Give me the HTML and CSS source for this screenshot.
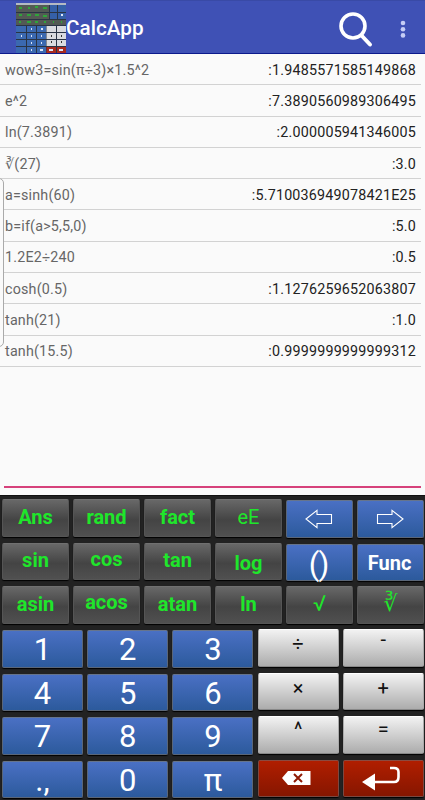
FILE: index.html
```html
<!DOCTYPE html>
<html lang="en">
<head>
    <meta charset="UTF-8">
    <meta name="viewport" content="width=device-width, initial-scale=1.0">
    <title>CalcApp</title>
    <link rel="stylesheet" href="styles.css">
</head>
<body>
    <header class="toolbar">
        <svg class="logo" viewBox="0 0 50 50">
            <rect width="50" height="50" fill="#2a3444"/>
            <rect width="50" height="2" fill="#b4bac4"/>
            <path d="M0 2h33v7H0zM0 10h33v6H0zM0 17h50v5H0z" fill="#535a54"/>
            <path d="M34 2h7v7h-7zM42 2h8v7h-8zM34 10h7v6h-7zM42 10h8v6h-8z" fill="#3560a8"/>
            <path d="M0 23h10v6H0zM11 23h9v6h-9zM21 23h9v6h-9zM0 30h10v6H0zM11 30h9v6h-9zM21 30h9v6h-9zM0 37h10v6H0zM11 37h9v6h-9zM21 37h9v6h-9zM0 44h10v6H0zM11 44h9v6h-9zM21 44h9v6h-9z" fill="#3b69b0"/>
            <path d="M30.500 23h9.500v6h-9.500zM41 23h9v6h-9zM30.500 30h9.500v6h-9.500zM41 30h9v6h-9zM30.500 37h9.500v6h-9.500zM41 37h9v6h-9z" fill="#d9dbdf"/>
            <path d="M30.500 44h9.500v6h-9.500zM41 44h9v6h-9z" fill="#a82a1e"/>
            <path d="M3 5h3M12 5h2M19 4h3M27 5h4M3 12h3M11 12h4M19 12h4M27 13h4M3 19h2M11 19h4M19 19h3M28 19h2M37 19h1M45 19h1" stroke="#2fa53a" stroke-width="2"/>
            <path d="M15 26h1M25 26h2M5 33h1M15 33h1M25 33h1M15 40h1M25 40h1M15 47h1M24 47h3M33 47h4M43 47h4M45 12h2" stroke="#dce6f8" stroke-width="2"/>
            <path d="M35 33h1M45 33h1M35 39h1M45 39h1" stroke="#333" stroke-width="2"/>
        </svg>
        <h1>CalcApp</h1>
        <svg class="search" viewBox="0 0 34 36">
            <circle cx="14" cy="14" r="12" fill="none" stroke="#fff" stroke-width="3.6"/>
            <path d="M22.5 23.5L31 32.5" stroke="#fff" stroke-width="4" stroke-linecap="round"/>
        </svg>
        <svg class="more" viewBox="0 0 6 18">
            <g fill="#c5cdf5">
                <circle cx="3" cy="3" r="2.3"/>
                <circle cx="3" cy="9.2" r="2.3"/>
                <circle cx="3" cy="15.4" r="2.3"/>
            </g>
        </svg>
    </header>

    <main class="history">
        <div class="edge-handle"></div>
        <div class="row"><span>wow3=sin(π÷3)×1.5^2</span><b>:1.9485571585149868</b></div>
        <div class="row"><span>e^2</span><b>:7.3890560989306495</b></div>
        <div class="row"><span>ln(7.3891)</span><b>:2.000005941346005</b></div>
        <div class="row"><span>∛(27)</span><b>:3.0</b></div>
        <div class="row"><span>a=sinh(60)</span><b>:5.710036949078421E25</b></div>
        <div class="row"><span>b=if(a&gt;5,5,0)</span><b>:5.0</b></div>
        <div class="row"><span>1.2E2÷240</span><b>:0.5</b></div>
        <div class="row"><span>cosh(0.5)</span><b>:1.1276259652063807</b></div>
        <div class="row"><span>tanh(21)</span><b>:1.0</b></div>
        <div class="row"><span>tanh(15.5)</span><b>:0.9999999999999312</b></div>
    </main>

    <div class="entry"></div>

    <section class="keypad">
        <div class="functions">
            <button class="key fn">Ans</button>
            <button class="key fn">rand</button>
            <button class="key fn">fact</button>
            <button class="key fn light">eE</button>
            <button class="key blue low arrow">
                <svg width="28" height="20" viewBox="0 0 28 20"><path d="M1 10L12 1.3V5.5H26.5V14.5H12V18.7Z" fill="none" stroke="#fff" stroke-width="1.1"/></svg>
            </button>
            <button class="key blue low arrow">
                <svg width="28" height="20" viewBox="0 0 28 20"><path d="M27 10L16 1.3V5.5H1.5V14.5H16V18.7Z" fill="none" stroke="#fff" stroke-width="1.1"/></svg>
            </button>

            <button class="key fn">sin</button>
            <button class="key fn up">cos</button>
            <button class="key fn">tan</button>
            <button class="key fn down">log</button>
            <button class="key blue low paren">()</button>
            <button class="key blue low func">Func</button>

            <button class="key fn">asin</button>
            <button class="key fn up">acos</button>
            <button class="key fn">atan</button>
            <button class="key fn">ln</button>
            <button class="key fn root">√</button>
            <button class="key fn root cube">∛</button>
        </div>

        <div class="numbers">
            <button class="key blue num">1</button>
            <button class="key blue num">2</button>
            <button class="key blue num">3</button>
            <button class="key white">÷</button>
            <button class="key white minus">-</button>

            <button class="key blue num">4</button>
            <button class="key blue num">5</button>
            <button class="key blue num">6</button>
            <button class="key white">×</button>
            <button class="key white">+</button>

            <button class="key blue num">7</button>
            <button class="key blue num">8</button>
            <button class="key blue num">9</button>
            <button class="key white caret">^</button>
            <button class="key white equals">=</button>

            <button class="key blue num">.,</button>
            <button class="key blue num">0</button>
            <button class="key blue num">π</button>
            <button class="key red">
                <svg width="30" height="16" viewBox="0 0 30 16">
                    <path d="M1 8L7 1H29.5V15H7Z" fill="#fff"/>
                    <path d="M13 4L21 12M21 4L13 12" stroke="#8f1a05" stroke-width="2"/>
                </svg>
            </button>
            <button class="key red">
                <svg width="40" height="26" viewBox="0 0 40 26">
                    <path d="M1 17L14 8.5V25.5Z" fill="#fff"/>
                    <path d="M13 17H33Q37.5 17 37.5 12V7Q37.5 3 33 3H29" fill="none" stroke="#fff" stroke-width="2.6"/>
                </svg>
            </button>
        </div>
    </section>
</body>
</html>
```
FILE: styles.css
```css
* {
    box-sizing: border-box;
}
body {
    margin: 0;
    height: 800px;
    display: flex;
    flex-direction: column;
    background: #fafafa;
    font-family: Roboto, "DejaVu Sans", sans-serif;
    overflow: hidden;
}
.toolbar {
    height: 54px;
    flex: none;
    display: flex;
    align-items: center;
    padding: 0 19px 0 16px;
    background: #3f51b5;
    border-top: 1px solid #394aa6;
    border-bottom: 1px solid #0c1a8c;
}
.logo {
    width: 50px;
    height: 50px;
    margin-top: 1px;
}
.toolbar h1 {
    margin: 2px auto 0 0;
    color: #fff;
    font-size: 20.7px;
    font-weight: 500;
    line-height: 28px;
}
.search {
    width: 34px;
    height: 36px;
    margin: 5px 27px 0 0;
}
.more {
    width: 6px;
    height: 18px;
    margin-top: 4px;
}

/* history list */
.history {
    position: relative;
    height: 432px;
    flex: none;
}
.row {
    height: 31.3px;
    margin-right: 4px;
    padding: 1px 5px 0 5px;
    display: flex;
    justify-content: space-between;
    align-items: center;
    border-bottom: 1px solid #d2d2d2;
    font-size: 14.3px;
    letter-spacing: 0.2px;
    color: #666;
}
.row b {
    font-weight: 400;
    color: #222;
}
.edge-handle {
    position: absolute;
    left: -6px;
    top: 124px;
    width: 10px;
    height: 169px;
    background: #fafafa;
    border: 1px solid #aaa;
    border-radius: 5px;
}
.entry {
    height: 9px;
    flex: none;
    margin: 0 4px;
    border-top: 2px solid #d6417b;
}

/* keypad */
.keypad {
    flex: 1;
    padding: 3px 2px 0;
    background: #222;
    border-top: 1px solid #111;
}
.functions {
    display: grid;
    grid-template-columns: repeat(6, 67px);
    grid-auto-rows: 37.5px;
    gap: 6px 4px;
}
.numbers {
    display: grid;
    grid-template-columns: repeat(5, 81px);
    grid-auto-rows: 37.5px;
    gap: 6.1px 4.2px;
    margin-top: 6.5px;
}
.key {
    display: flex;
    justify-content: center;
    align-items: center;
    min-width: 0;
    margin: 0;
    padding: 0;
    border: 1px solid #555;
    border-radius: 2px;
    box-shadow: 0 1px 1px #000;
    font-family: inherit;
    line-height: 26px;
}
.fn {
    padding-bottom: 2px;
    background: linear-gradient(#686868, #444 55%, #505050);
    border-color: #707070 #555 #555;
    color: #1fe62b;
    font-size: 20px;
    font-weight: 700;
}
.light {
    font-weight: 400;
}
.up {
    padding-bottom: 5px;
}
.down {
    padding-top: 4px;
    padding-bottom: 0;
}
.low {
    margin-top: 1px;
    margin-bottom: -1px;
}
.blue {
    background: linear-gradient(#4a70c4, #2c5a9c);
    border-color: #66748c #5a6678 #5a6678;
    color: #fff;
}
.arrow {
    padding-right: 2px;
}
.paren {
    padding: 5px 2px 0 0;
    font-size: 31px;
    letter-spacing: -1px;
}
.func {
    padding: 1px 2px 0 0;
    font-size: 20px;
    font-weight: 700;
}
.root {
    font-size: 22px;
    font-weight: 400;
}
.cube {
    font-size: 22px;
}
.num {
    padding-top: 3px;
    font-size: 31px;
}
.white {
    margin-top: -1px;
    margin-bottom: 1px;
    padding-bottom: 7px;
    background: linear-gradient(#f2f2f2, #acacac);
    border-color: #fff #aaa #888;
    color: #111;
    font-size: 20px;
}
.minus {
    padding-bottom: 17px;
}
.caret {
    padding-bottom: 11px;
}
.equals {
    padding-bottom: 12px;
}
.red {
    margin-top: -1px;
    margin-bottom: 1px;
    padding: 0 4px 2px 0;
    background: linear-gradient(#b01e00, #861600);
    border-color: #8a4a40 #7c4840 #7c4840;
}
```
